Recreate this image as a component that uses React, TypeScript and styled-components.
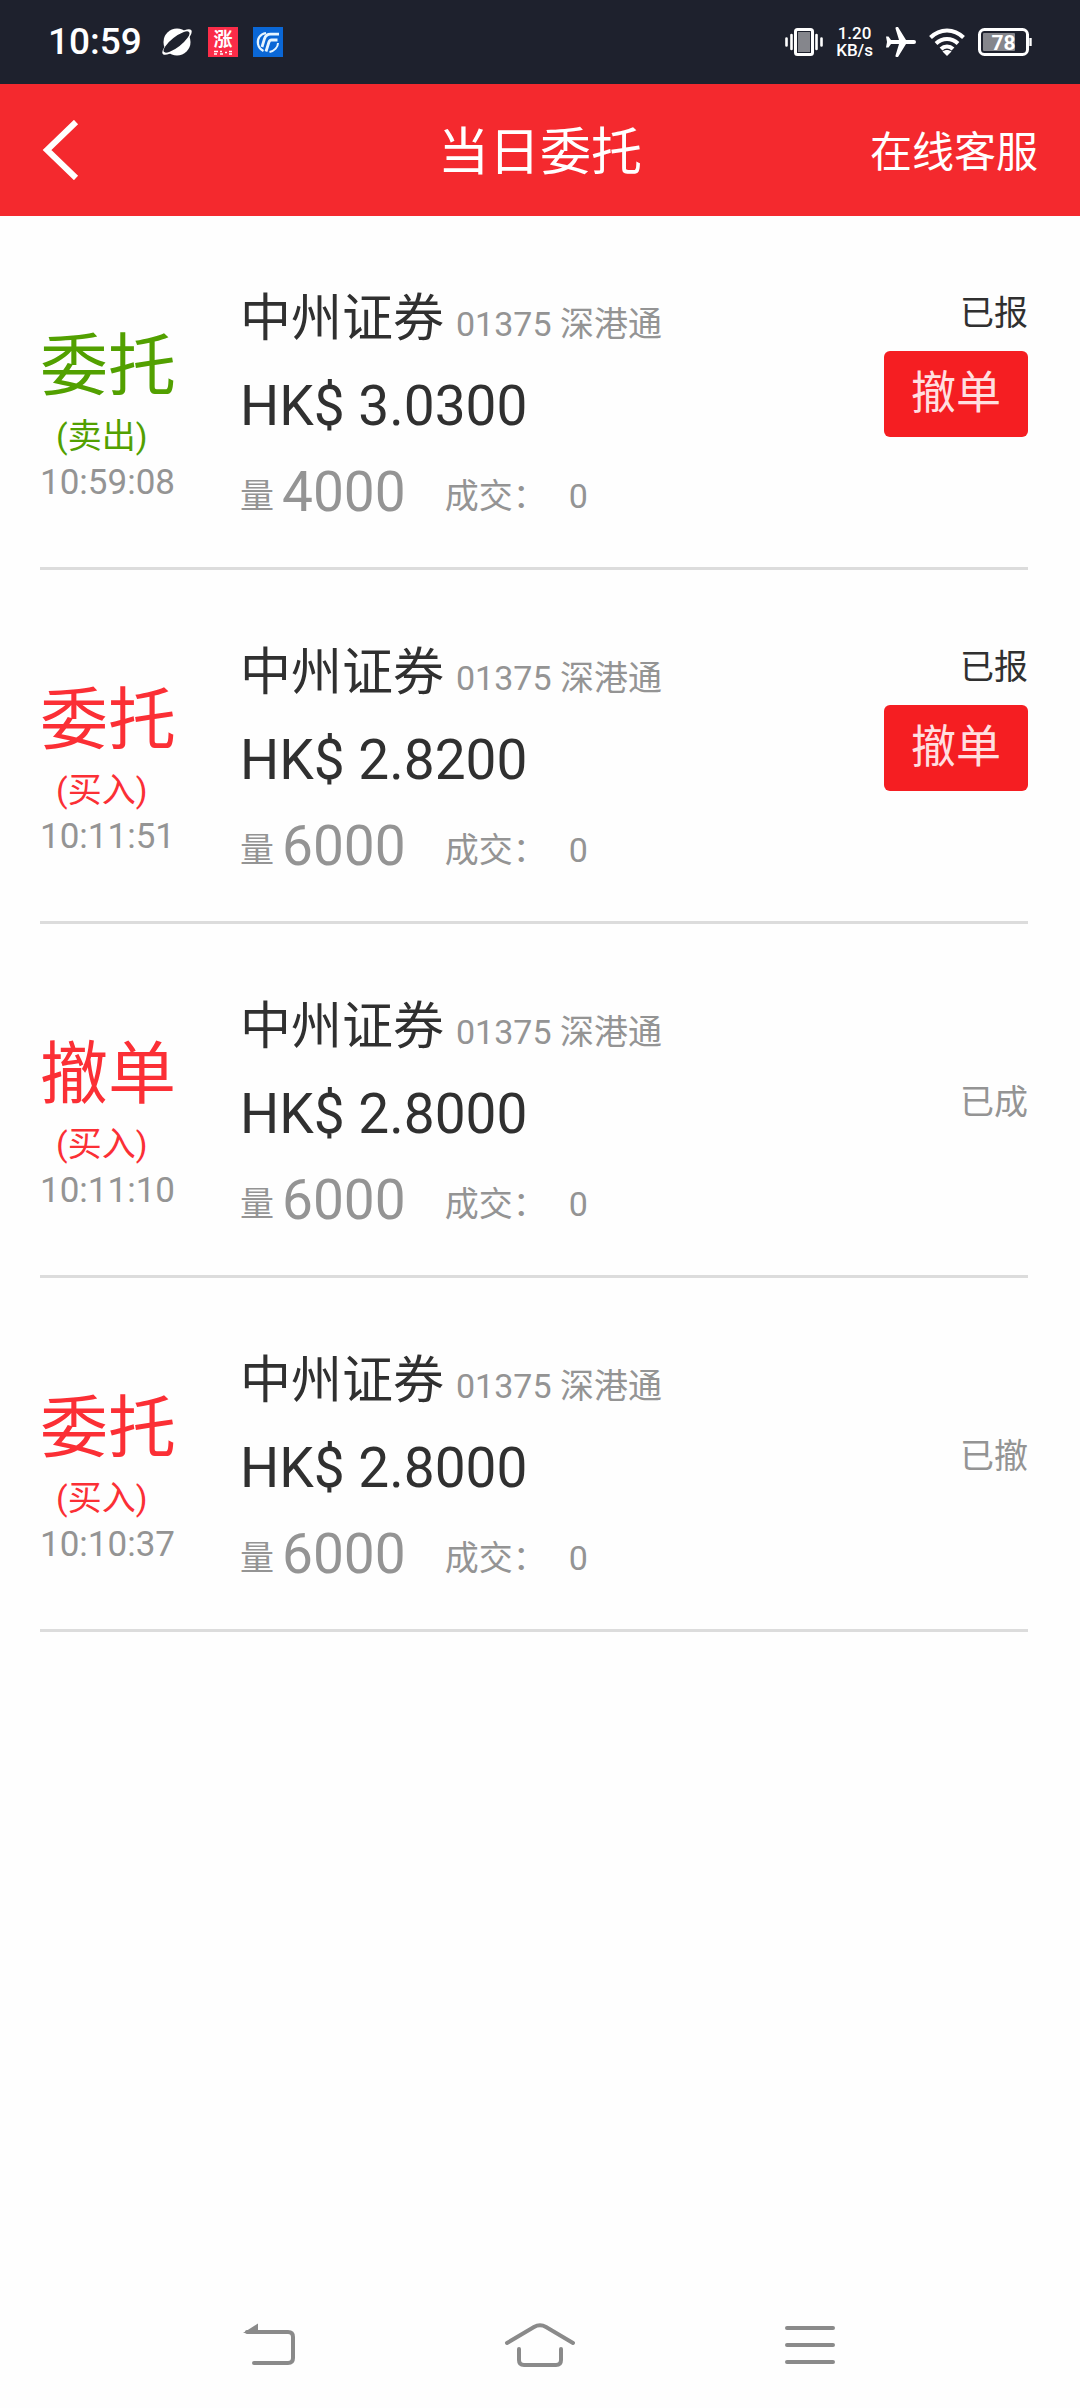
import React from 'react';
import styled, { createGlobalStyle } from 'styled-components';

const GlobalStyle = createGlobalStyle`
  * { box-sizing: border-box; }
  body {
    margin: 0;
    background: #fefefe;
    font-family: Roboto, "Noto Sans CJK SC", sans-serif;
    color: #303030;
  }
  button { font-family: inherit; border: 0; padding: 0; background: none; cursor: pointer; }
`;

const Screen = styled.div`
  display: flex;
  flex-direction: column;
  min-height: 100vh;
`;

const StatusBar = styled.div`
  display: flex;
  align-items: center;
  justify-content: space-between;
  height: 84px;
  padding: 0 48px;
  background: #1e212d;
  color: #fff;
`;

const StatusGroup = styled.div<{ $gap: number }>`
  display: flex;
  align-items: center;
  gap: ${(p) => p.$gap}px;
`;

const Clock = styled.span`
  margin-right: 4px;
  font-size: 37px;
  font-weight: 500;
  line-height: 44px;
`;

const Speed = styled.span`
  display: flex;
  flex-direction: column;
  align-items: center;
  font-size: 17px;
  font-weight: 500;
  line-height: 17px;
`;

const Header = styled.header`
  display: grid;
  grid-template-columns: 1fr auto 1fr;
  align-items: center;
  height: 132px;
  padding: 0 42px;
  background: #f4292e;
  color: #fff;
`;

const BackButton = styled.button`
  display: flex;
  justify-self: start;
`;

const Title = styled.h1`
  margin: 0;
  padding-top: 6px;
  font-size: 51px;
  font-weight: 400;
  line-height: 72px;
`;

const ServiceLink = styled.a`
  justify-self: end;
  padding-top: 6px;
  color: inherit;
  font-size: 42px;
  line-height: 60px;
  text-decoration: none;
`;

const OrderList = styled.ul`
  flex: 1;
  margin: 0;
  padding: 0 52px 0 40px;
  list-style: none;
`;

const OrderRow = styled.li`
  display: grid;
  grid-template-columns: 200px 1fr auto;
  height: 354px;
  border-bottom: 3px solid #dcdcdc;
`;

const Kind = styled.div<{ $sell: boolean }>`
  padding-top: 106px;
  color: ${(p) => (p.$sell ? '#52a000' : '#fb2f35')};
`;

const KindName = styled.div`
  font-size: 68px;
  line-height: 90px;
`;

const Side = styled.div`
  padding-left: 16px;
  font-size: 34px;
  line-height: 48px;
`;

const Time = styled.time`
  display: block;
  color: #949494;
  font-size: 35px;
  line-height: 46px;
`;

const Detail = styled.div`
  padding-top: 60px;
`;

const Line = styled.div`
  display: flex;
  align-items: baseline;
  line-height: 86px;
`;

const QuantityLine = styled(Line)`
  align-items: flex-end;
`;

const StockName = styled.span`
  margin-right: 12px;
  font-size: 51px;
`;

const Small = styled.span<{ $gap?: number }>`
  margin-right: ${(p) => p.$gap ?? 0}px;
  color: #949494;
  font-size: 34px;
  line-height: 78px;
`;

const Price = styled.span`
  font-size: 55px;
`;

const Quantity = styled.span`
  margin-right: 39px;
  color: #949494;
  font-size: 55px;
`;

const State = styled.div`
  display: grid;
  grid-template-rows: 1fr auto 1fr;
  justify-items: end;
  padding-top: 4px;
`;

const StateText = styled.span<{ $settled: boolean }>`
  grid-row: ${(p) => (p.$settled ? 2 : 1)};
  align-self: end;
  padding-bottom: ${(p) => (p.$settled ? 0 : 14)}px;
  color: ${(p) => (p.$settled ? '#949494' : '#303030')};
  font-size: 34px;
  line-height: 48px;
`;

const CancelButton = styled.button`
  grid-row: 2;
  width: 144px;
  height: 86px;
  border-radius: 6px;
  background: #f51e22;
  color: #ffdfe0;
  font-size: 45px;
  line-height: 64px;
`;

const NavBar = styled.nav`
  display: flex;
  height: 126px;
  padding: 0 12.5%;
`;

const NavButton = styled.button`
  display: flex;
  flex: 1;
  align-items: center;
  justify-content: center;
`;

interface Order {
  kind: string;
  side: '买入' | '卖出';
  time: string;
  price: string;
  quantity: number;
  filled: number;
  state: string;
  open: boolean;
}

const orders: Order[] = [
  { kind: '委托', side: '卖出', time: '10:59:08', price: '3.0300', quantity: 4000, filled: 0, state: '已报', open: true },
  { kind: '委托', side: '买入', time: '10:11:51', price: '2.8200', quantity: 6000, filled: 0, state: '已报', open: true },
  { kind: '撤单', side: '买入', time: '10:11:10', price: '2.8000', quantity: 6000, filled: 0, state: '已成', open: false },
  { kind: '委托', side: '买入', time: '10:10:37', price: '2.8000', quantity: 6000, filled: 0, state: '已撤', open: false },
];

const PlanetIcon = () => (
  <svg width="32" height="30" viewBox="0 0 32 30">
    <circle cx="16" cy="15" r="13.5" fill="#fff" />
    <ellipse cx="16" cy="15" rx="18.5" ry="6" transform="rotate(-40 16 15)" fill="#fff" />
    <ellipse cx="15.5" cy="15" rx="16" ry="5" transform="rotate(-38 15.5 15)" fill="#1e212d" />
  </svg>
);

const RiseAppIcon = () => (
  <svg width="30" height="30" viewBox="0 0 30 30">
    <rect width="30" height="30" fill="#fb2c48" />
    <text x="15" y="19" textAnchor="middle" fontSize="19" fontWeight="700" fill="#fff">涨</text>
    <path d="M6 24.5h4M6 27h3M12 24.5h2M12 27h3M17 25.5h2M21 24.5h3M21 27h3" stroke="#fff" strokeWidth="1.4" />
  </svg>
);

const FundAppIcon = () => (
  <svg width="30" height="30" viewBox="0 0 30 30">
    <rect width="30" height="30" fill="#0a67d6" />
    <g fill="none" stroke="#e6f5ff">
      <path d="M13 6C7 7 4 11.500 5 17c.6 3 2.500 5.500 5.500 7" strokeWidth="2.200" />
      <path d="M26 7.200H17.500c-3 0-5 1.500-6 4.500L9 20" strokeWidth="2.800" />
      <path d="M24.500 13H18.500c-1.500 0-2.200.8-2.700 2.500L13 24.500" strokeWidth="2.800" />
      <path d="M25 16c0 4-3.500 8-8.500 9" strokeWidth="2" />
    </g>
  </svg>
);

const VibrateIcon = () => (
  <svg width="38" height="30" viewBox="0 0 38 30">
    <rect x="10.500" y="2.500" width="17" height="25" rx="2" fill="none" stroke="#fff" strokeWidth="3" />
    <rect x="13" y="5" width="12" height="20" fill="#85868c" />
    <path d="M6.500 8v14M1.500 11.500v7M31.500 8v14M36.500 11.500v7" stroke="#fff" strokeWidth="2.600" strokeLinecap="round" />
  </svg>
);

const PlaneIcon = () => (
  <svg width="30" height="30" viewBox="0 0 30 30">
    <path
      fill="#fff"
      d="M0 9.500h2.500L5 13h8L9.500 1.500Q9.200 0 10.500 0h1.500L20 13h8a2 2 0 0 1 0 4h-8l-8 13h-1.500Q9.200 30 9.500 28.500L13 17H5l-2.500 3.500H0L1 15z"
    />
  </svg>
);

const WifiIcon = () => (
  <svg width="36" height="28" viewBox="0 0 36 28">
    <g fill="none" stroke="#fff" strokeWidth="4">
      <path d="M1.500 9.500C11 0 25 0 34.500 9.500" />
      <path d="M7 15.500C13.500 9.500 22.500 9.500 29 15.500" />
      <path d="M12 21c3.500-3.500 8.500-3.500 12 0" />
    </g>
    <path d="M13.500 23.500c2.500-2 6.500-2 9 0L18 28z" fill="#fff" />
  </svg>
);

const BatteryIcon = () => (
  <svg width="54" height="28" viewBox="0 0 54 28">
    <rect x="1.500" y="1.500" width="48" height="25" rx="5" fill="none" stroke="#fff" strokeWidth="3" />
    <rect x="5" y="5" width="32" height="18" rx="1" fill="#85868c" />
    <path d="M52.500 10v8" stroke="#fff" strokeWidth="2.400" />
    <text x="25.500" y="21.500" textAnchor="middle" fontSize="21" fontWeight="700" fill="#fff">78</text>
  </svg>
);

const ChevronIcon = () => (
  <svg width="38" height="60" viewBox="0 0 38 60" fill="none">
    <path d="M34 2L5 30l29 28" stroke="#fff" strokeWidth="6" />
  </svg>
);

const navIcon = { fill: 'none', stroke: '#8a8a8a', strokeWidth: 4, strokeLinecap: 'round' as const };

const ReturnIcon = () => (
  <svg width="54" height="44" viewBox="0 0 54 44" {...navIcon}>
    <path d="M4 9h41q5 0 5 5v21q0 5-5 5H11" />
    <path d="M0 10L15 .5V10z" fill="#8a8a8a" stroke="none" />
  </svg>
);

const HomeIcon = () => (
  <svg width="72" height="46" viewBox="0 0 72 46" {...navIcon}>
    <path d="M3 21L30 5q6-3.500 12 0l27 16" />
    <path d="M15 27v11q0 5 5 5h32q5 0 5-5V27" />
  </svg>
);

const MenuIcon = () => (
  <svg width="50" height="40" viewBox="0 0 50 40" {...navIcon}>
    <path d="M2 3h46M2 20h46M2 37h46" />
  </svg>
);

const OrderItem = ({ order }: { order: Order }) => (
  <OrderRow>
    <Kind $sell={order.side === '卖出'}>
      <KindName>{order.kind}</KindName>
      <Side>({order.side})</Side>
      <Time>{order.time}</Time>
    </Kind>
    <Detail>
      <Line>
        <StockName>中州证券</StockName>
        <Small>01375 深港通</Small>
      </Line>
      <Line>
        <Price>HK$ {order.price}</Price>
      </Line>
      <QuantityLine>
        <Small $gap={8}>量</Small>
        <Quantity>{order.quantity}</Quantity>
        <Small $gap={22}>成交：</Small>
        <Small>{order.filled}</Small>
      </QuantityLine>
    </Detail>
    <State>
      <StateText $settled={!order.open}>{order.state}</StateText>
      {order.open && <CancelButton type="button">撤单</CancelButton>}
    </State>
  </OrderRow>
);

export default function App() {
  return (
    <Screen>
      <GlobalStyle />
      <StatusBar>
        <StatusGroup $gap={15}>
          <Clock>10:59</Clock>
          <PlanetIcon />
          <RiseAppIcon />
          <FundAppIcon />
        </StatusGroup>
        <StatusGroup $gap={13}>
          <VibrateIcon />
          <Speed>
            <span>1.20</span>
            <span>KB/s</span>
          </Speed>
          <PlaneIcon />
          <WifiIcon />
          <BatteryIcon />
        </StatusGroup>
      </StatusBar>
      <Header>
        <BackButton type="button" aria-label="返回">
          <ChevronIcon />
        </BackButton>
        <Title>当日委托</Title>
        <ServiceLink href="#service">在线客服</ServiceLink>
      </Header>
      <OrderList>
        {orders.map((order) => (
          <OrderItem key={order.time} order={order} />
        ))}
      </OrderList>
      <NavBar>
        <NavButton type="button" aria-label="返回">
          <ReturnIcon />
        </NavButton>
        <NavButton type="button" aria-label="主页">
          <HomeIcon />
        </NavButton>
        <NavButton type="button" aria-label="菜单">
          <MenuIcon />
        </NavButton>
      </NavBar>
    </Screen>
  );
}
